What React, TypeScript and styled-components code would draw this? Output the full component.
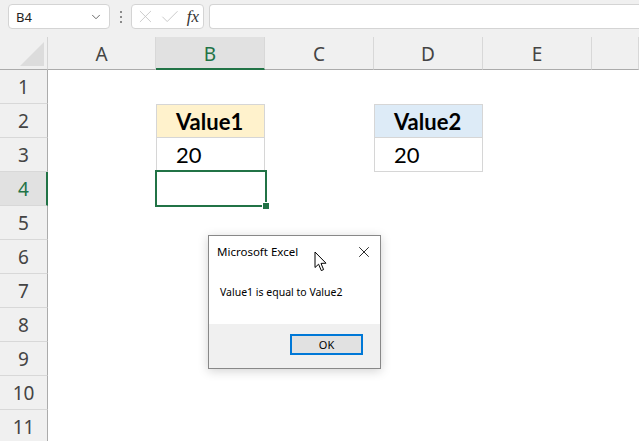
import React from 'react';
import styled, { createGlobalStyle } from 'styled-components';
import { ChevronDown, X, Check } from 'lucide-react';

const GlobalStyle = createGlobalStyle`
  html, body {
    margin: 0;
    padding: 0;
    background: #f0f0f0;
  }
  * {
    box-sizing: border-box;
  }
`;

const GREEN = '#217346';

const Window = styled.div`
  position: relative;
  width: 639px;
  height: 441px;
  overflow: hidden;
  background: #f0f0f0;
  font-family: 'Noto Sans', 'Open Sans', sans-serif;
`;

const Toolbar = styled.div`
  display: flex;
  align-items: flex-start;
  height: 37px;
  padding: 4px 0 0 8px;
`;

const Field = styled.div`
  display: flex;
  align-items: center;
  height: 25px;
  background: #fff;
  border: 1px solid #d4d4d4;
  border-radius: 4px;
`;

const NameBox = styled(Field)`
  width: 102px;
  padding: 0 6px 0 7px;
  justify-content: space-between;
  font-size: 13px;
  color: #222;
`;

const Dots = styled.div`
  display: flex;
  flex-direction: column;
  gap: 3px;
  padding: 7px 9px 0 10px;

  span {
    width: 2px;
    height: 2px;
    background: #8a8a8a;
  }
`;

const FxBox = styled(Field)`
  width: 73px;
  padding: 0 4px 0 3px;
  gap: 3px;
  color: #c4c4c4;
`;

const FxLabel = styled.span`
  font-family: 'Liberation Serif', serif;
  font-style: italic;
  font-size: 17px;
  color: #333;
  margin-left: 3px;
`;

const FormulaInput = styled(Field)`
  flex: 1;
  margin-left: 5px;
  border-right: none;
  border-radius: 4px 0 0 4px;
`;

const Sheet = styled.div`
  display: grid;
  grid-template-columns: 48px 108px repeat(4, 109px) 1fr;
  grid-template-rows: 33px;
  grid-auto-rows: 34px;
`;

const Corner = styled.div`
  display: flex;
  align-items: flex-end;
  justify-content: flex-end;
  padding: 0 3px 3px 0;
  border-right: 1px solid #d4d4d4;
  border-bottom: 1px solid #ababab;
`;

const ColHeader = styled.div<{ $active?: boolean }>`
  display: flex;
  align-items: center;
  justify-content: center;
  font-size: 19px;
  color: ${({ $active }) => ($active ? GREEN : '#444')};
  background: ${({ $active }) => ($active ? '#e1e1e1' : '#f0f0f0')};
  border-right: 1px solid #d8d8d8;
  border-bottom: ${({ $active }) => ($active ? `2px solid ${GREEN}` : '1px solid #ababab')};
  padding-top: 2px;
`;

const RowHeader = styled.div<{ $active?: boolean }>`
  display: flex;
  align-items: center;
  justify-content: center;
  font-size: 19px;
  color: ${({ $active }) => ($active ? GREEN : '#444')};
  background: ${({ $active }) => ($active ? '#e1e1e1' : '#f0f0f0')};
  border-right: ${({ $active }) => ($active ? `2px solid ${GREEN}` : '1px solid #ababab')};
  border-bottom: 1px solid #d8d8d8;
  padding-left: ${({ $active }) => ($active ? '1px' : '0')};
`;

const Cell = styled.div`
  background: #fff;
  font-family: 'Lato', 'Liberation Sans', sans-serif;
  font-size: 22px;
  color: #000;
`;

const TableCell = styled(Cell)<{ $fill?: string; $head?: boolean }>`
  display: flex;
  align-items: center;
  padding: 0 0 0 19px;
  background: ${({ $fill }) => $fill || '#fff'};
  font-weight: ${({ $head }) => ($head ? 700 : 400)};
  border: 1px solid #d6d6d6;
  border-top: ${({ $head }) => ($head ? '1px solid #d6d6d6' : 'none')};
`;

const SelectedCell = styled(Cell)`
  position: relative;

  &::after {
    content: '';
    position: absolute;
    top: -2px;
    left: -1px;
    right: -2px;
    bottom: -1px;
    border: 2px solid ${GREEN};
  }

  &::before {
    content: '';
    position: absolute;
    right: -4px;
    bottom: -3px;
    width: 6px;
    height: 6px;
    background: ${GREEN};
    box-shadow: -1px -1px 0 #fff;
    z-index: 1;
  }
`;

const Dialog = styled.div`
  position: absolute;
  left: 208px;
  top: 235px;
  width: 173px;
  height: 134px;
  display: flex;
  flex-direction: column;
  background: #fff;
  border: 1px solid #888;
  box-shadow: 0 2px 10px rgba(0, 0, 0, 0.18);
  font-family: 'Noto Sans', 'Open Sans', sans-serif;
  color: #000;
`;

const TitleBar = styled.div`
  display: flex;
  align-items: center;
  justify-content: space-between;
  height: 31px;
  padding: 0 7px 0 8px;
  font-size: 11.5px;
`;

const Message = styled.div`
  flex: 1;
  display: flex;
  align-items: center;
  padding: 0 0 8px 11px;
  font-size: 10.5px;
`;

const Footer = styled.div`
  display: flex;
  justify-content: flex-end;
  align-items: flex-start;
  height: 44px;
  padding: 10px 17px 0 0;
  background: #f0f0f0;
`;

const OkButton = styled.button`
  width: 73px;
  height: 21px;
  border: 2px solid #0078d7;
  background: #e1e1e1;
  font-family: 'Noto Sans', 'Open Sans', sans-serif;
  font-size: 11px;
  color: #000;
  padding: 0;
`;

const Pointer = styled.svg`
  position: absolute;
  left: 314px;
  top: 251px;
`;

const cols = ['A', 'B', 'C', 'D', 'E', ''];
const rowCount = 11;

const renderCell = (row: number, col: number) => {
  const key = `${row}-${col}`;
  if (row === 2 && col === 1) return <TableCell key={key} $head $fill="#fff2cc">Value1</TableCell>;
  if (row === 3 && col === 1) return <TableCell key={key}>20</TableCell>;
  if (row === 2 && col === 3) return <TableCell key={key} $head $fill="#ddebf7">Value2</TableCell>;
  if (row === 3 && col === 3) return <TableCell key={key}>20</TableCell>;
  if (row === 4 && col === 1) return <SelectedCell key={key} />;
  return <Cell key={key} />;
};

export default function App() {
  const rows = Array.from({ length: rowCount }, (_, i) => i + 1);

  return (
    <>
      <GlobalStyle />
      <Window>
        <Toolbar>
          <NameBox>
            <span>B4</span>
            <ChevronDown size={14} strokeWidth={1.5} color="#555" />
          </NameBox>
          <Dots>
            <span />
            <span />
            <span />
          </Dots>
          <FxBox>
            <X size={21} strokeWidth={1} />
            <Check size={22} strokeWidth={1} />
            <FxLabel>fx</FxLabel>
          </FxBox>
          <FormulaInput />
        </Toolbar>

        <Sheet>
          <Corner>
            <svg width="24" height="24" viewBox="0 0 24 24">
              <polygon points="24,0 24,24 0,24" fill="#dcdcdc" />
            </svg>
          </Corner>
          {cols.map((c, i) => (
            <ColHeader key={c || 'F'} $active={i === 1}>
              {c}
            </ColHeader>
          ))}
          {rows.map((r) => (
            <React.Fragment key={r}>
              <RowHeader $active={r === 4}>{r}</RowHeader>
              {cols.map((_, ci) => renderCell(r, ci))}
            </React.Fragment>
          ))}
        </Sheet>

        <Dialog>
          <TitleBar>
            <span>Microsoft Excel</span>
            <X size={18} strokeWidth={1.1} color="#000" />
          </TitleBar>
          <Message>Value1 is equal to Value2</Message>
          <Footer>
            <OkButton>OK</OkButton>
          </Footer>
        </Dialog>

        <Pointer width="14" height="22" viewBox="0 0 14 22">
          <path
            d="M1 1 L1 16.5 L4.6 13.2 L7.3 19.6 L9.6 18.6 L7 12.4 L12 12.2 Z"
            fill="#fff"
            stroke="#000"
            strokeWidth="1"
            strokeLinejoin="round"
          />
        </Pointer>
      </Window>
    </>
  );
}
